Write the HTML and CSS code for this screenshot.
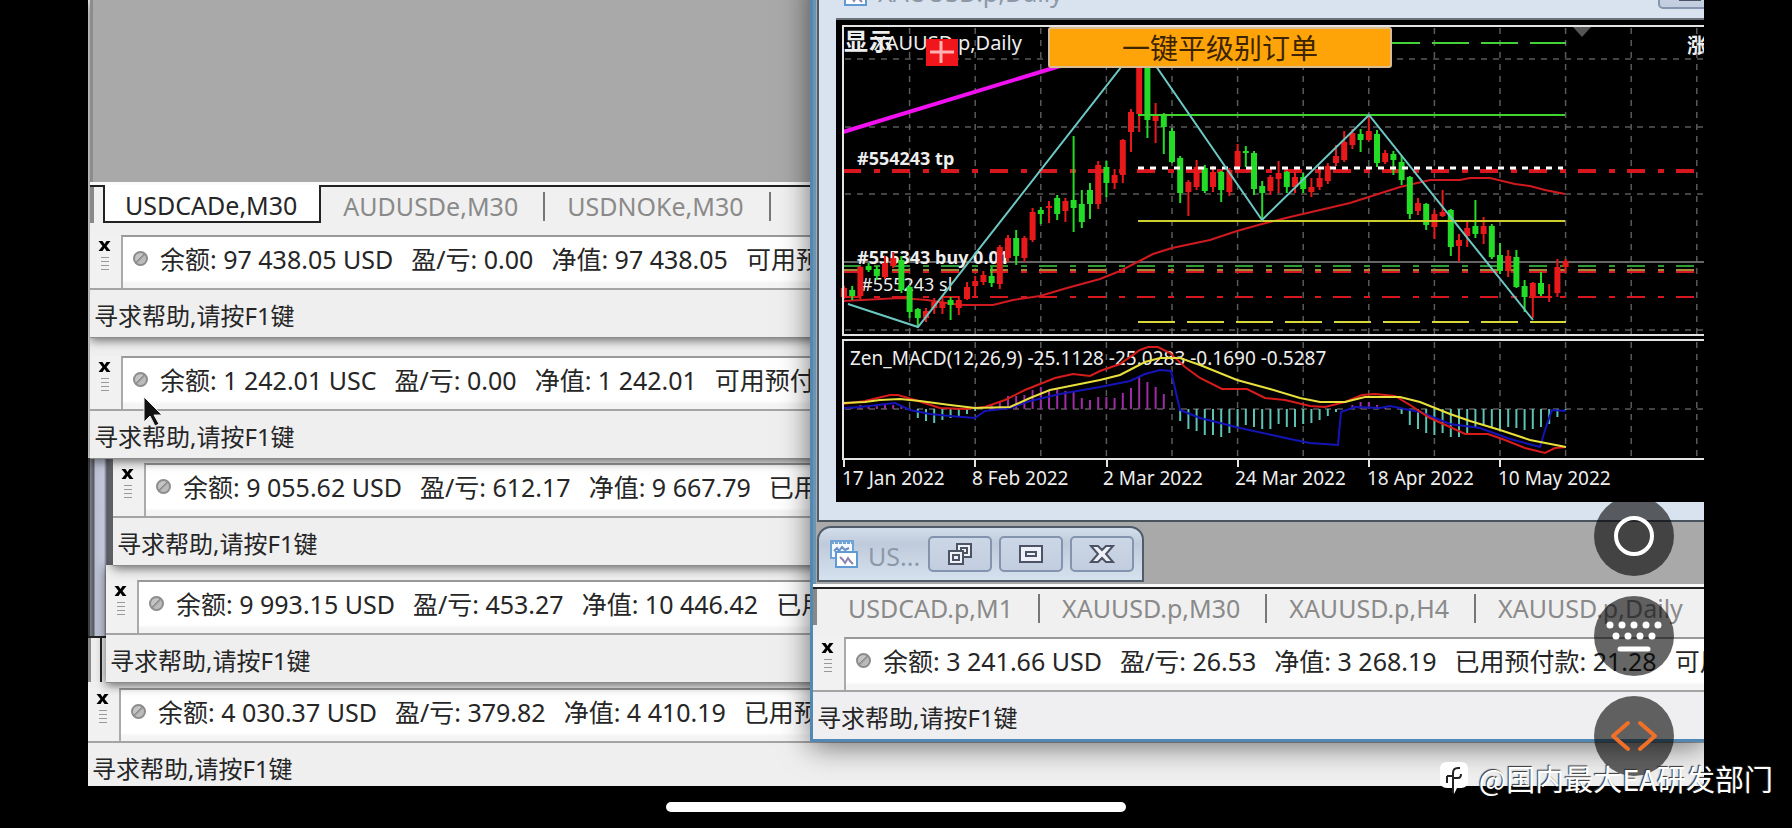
FILE: index.html
```html
<!DOCTYPE html>
<html lang="zh-CN">

<head>
    <meta charset="UTF-8">
    <meta name="viewport" content="width=device-width, initial-scale=1.0">
    <title>MT4</title>
    <link rel="stylesheet" href="styles.css">
</head>

<body>
    <svg class="sprite" aria-hidden="true">
        <symbol id="close" viewBox="0 0 12 12">
            <path d="M0 1h4l2 3 2-3h4L8 6l4 5H8L6 8l-2 3H0l4-5z" />
        </symbol>
        <symbol id="chart-icon" viewBox="0 0 30 30">
            <path d="M2 2h22v17H2z" fill="#f4f9ff" stroke="#6fa3d6" stroke-width="2" />
            <path d="M2 3h22" stroke="#6fa3d6" stroke-width="4" stroke-dasharray="3 1" />
            <path d="M5 12l3-3 2 3 3-4 3 3 4-2" fill="none" stroke="#6a8fc4" stroke-width="2" />
            <path d="M7 13h21v15H7z" fill="#fff" stroke="#5f9ad4" stroke-width="2" />
            <path d="M11 18l3 3 2 3 3-5 2 3 3 3" fill="none" stroke="#8a83b4" stroke-width="2" />
        </symbol>
    </svg>

    <main class="screen">
        <div class="left">
            <section class="terminal first">
                <div class="mdi"></div>
                <nav class="tabs">
                    <a class="tab active" href="#">USDCADe,M30</a>
                    <a class="tab" href="#">AUDUSDe,M30</a>
                    <a class="tab" href="#">USDNOKe,M30</a>
                </nav>
                <div class="toolbar">
                    <div class="grip"><button aria-label="关闭"><svg><use href="#close" /></svg></button></div>
                    <div class="balance"><i class="dot"></i><span>余额: 97 438.05 USD</span><span>盈/亏: 0.00</span><span>净值: 97 438.05</span><span>可用预付款</span></div>
                </div>
                <div class="status">寻求帮助,请按F1键</div>
            </section>

            <section class="terminal second">
                <div class="toolbar">
                    <div class="grip"><button aria-label="关闭"><svg><use href="#close" /></svg></button></div>
                    <div class="balance"><i class="dot"></i><span>余额: 1 242.01 USC</span><span>盈/亏: 0.00</span><span>净值: 1 242.01</span><span>可用预付款</span></div>
                </div>
                <div class="status">寻求帮助,请按F1键</div>
            </section>

            <div class="group">
                <section class="terminal third">
                    <div class="toolbar">
                        <div class="grip"><button aria-label="关闭"><svg><use href="#close" /></svg></button></div>
                        <div class="balance"><i class="dot"></i><span>余额: 9 055.62 USD</span><span>盈/亏: 612.17</span><span>净值: 9 667.79</span><span>已用预付款</span></div>
                    </div>
                    <div class="status">寻求帮助,请按F1键</div>
                </section>

                <section class="terminal fourth">
                    <div class="toolbar">
                        <div class="grip"><button aria-label="关闭"><svg><use href="#close" /></svg></button></div>
                        <div class="balance"><i class="dot"></i><span>余额: 9 993.15 USD</span><span>盈/亏: 453.27</span><span>净值: 10 446.42</span><span>已用预付款</span></div>
                    </div>
                    <div class="status">寻求帮助,请按F1键</div>
                </section>
            </div>

            <section class="terminal fifth">
                <div class="toolbar">
                    <div class="grip"><button aria-label="关闭"><svg><use href="#close" /></svg></button></div>
                    <div class="balance"><i class="dot"></i><span>余额: 4 030.37 USD</span><span>盈/亏: 379.82</span><span>净值: 4 410.19</span><span>已用预付款</span></div>
                </div>
                <div class="status">寻求帮助,请按F1键</div>
            </section>
        </div>

        <section class="window">
            <div class="workspace">
                <div class="child">
                    <header class="child-title">
                        <svg class="icon"><use href="#chart-icon" /></svg>
                        <span>XAUUSD.p,Daily</span>
                        <button class="win-btn" aria-label="最小化">
                            <svg viewBox="0 0 26 26"><path d="M3 15h20v6H3z" /></svg>
                        </button>
                    </header>
                    <div class="chart">
                        <svg viewBox="836 20 868 482" preserveAspectRatio="xMinYMin slice">
                            <g class="grid" id="grid"></g>
                            <path class="price" d="M844 262H1704" />
                            <path d="M1573 27h18l-9 10z" fill="#555" />

                            <path class="levels green" d="M843 266H1698" />
                            <path class="levels olive" d="M843 270H1698" />
                            <path class="levels red" d="M843 272H1698" />
                            <path class="levels red" d="M843 297H1698" />
                            <path class="levels red thick" d="M843 171H1698" />

                            <path d="M843 132L1060 66" stroke="#f010f0" stroke-width="4" />

                            <g class="labels">
                                <text class="zh" x="844" y="50">显</text>
                                <text class="zh" x="869" y="50">示</text>
                                <text class="name" x="874" y="50">XAUUSD.p,Daily</text>
                                <text class="zh small" x="1687" y="53">涨</text>
                                <text class="order bold" x="857" y="165">#554243 tp</text>
                                <text class="order bold" x="857" y="264">#555343 buy 0.01</text>
                                <text class="order" x="861" y="291">#555243 sl</text>
                                <text x="850" y="365">Zen_MACD(12,26,9) -25.1128 -25.0283 -0.1690 -0.5287</text>
                                <text x="842" y="485">17 Jan 2022</text>
                                <text x="972" y="485">8 Feb 2022</text>
                                <text x="1103" y="485">2 Mar 2022</text>
                                <text x="1235" y="485">24 Mar 2022</text>
                                <text x="1367" y="485">18 Apr 2022</text>
                                <text x="1498" y="485">10 May 2022</text>
                            </g>

                            <path class="average" d="M843 301L900 298L927 300L960 305L993 305L1013 300L1040 296L1067 288L1100 279L1120 271L1153 254L1172 248L1210 240L1237 231L1262 224L1290 217L1320 210L1350 203L1375 195L1400 187L1430 180L1460 180L1470 178L1490 178L1515 184L1530 186L1545 190L1565 194" />

                            <g id="candles"></g>

                            <path d="M1138 115H1565" stroke="#3fd52f" stroke-width="2" />
                            <path d="M1138 221H1565" stroke="#cfd02c" stroke-width="2" />
                            <path d="M1138 43H1566" stroke="#44d238" stroke-width="2" stroke-dasharray="37 12" />
                            <path d="M1138 322H1566" stroke="#d8d83a" stroke-width="2" stroke-dasharray="37 12" />
                            <path d="M1138 168H1563" stroke="#fff" stroke-width="3" stroke-dasharray="6 6" />
                            <path class="zigzag" d="M848 304L918 327L1140 43L1262 220L1369 115L1533 320" />

                            <g id="macd"></g>
                            <path class="line" stroke="#1414b8" d="M843 408L860 407L895 403L910 410L930 414L950 416L975 418L985 411L1010 408L1030 401L1060 394L1100 387L1130 381L1145 374L1160 370L1171 371L1180 410L1200 418L1240 428L1290 439L1310 443L1338 445L1341 412L1355 407L1380 408L1390 406L1420 412L1450 424L1480 428L1510 439L1540 447L1545 430L1552 410L1566 411" />
                            <path class="line" stroke="#d81c1c" d="M843 404L865 401L890 395L898 395L915 400L940 408L965 409L985 407L1005 400L1025 390L1040 384L1055 378L1073 374L1090 376L1100 371L1120 364L1140 350L1148 347L1158 347L1170 353L1185 367L1200 378L1222 389L1247 389L1265 398L1285 400L1310 406L1325 407L1345 402L1362 395L1375 394L1395 396L1410 405L1430 418L1450 427L1465 434L1488 434L1505 440L1525 448L1545 453L1555 448L1566 447" />
                            <path class="line" stroke="#e8e03c" d="M843 403L865 402L880 400L900 399L920 401L950 405L975 408L1010 407L1030 398L1050 390L1075 385L1100 380L1120 375L1145 362L1160 358L1180 358L1200 365L1237 380L1270 389L1300 398L1320 402L1345 402L1365 397L1400 397L1420 402L1450 414L1470 421L1500 430L1530 440L1566 447" />

                            <path class="frame" d="M1704 26H843V335H1704M1704 340H843V459H1704M844 459v8M975 459v8M1107 459v8M1238 459v8M1369 459v8M1500 459v8" />
                            <path d="M926 39h32v27h-32z" fill="#f0161c" />
                            <path d="M930 52h24M941 41v22" stroke="#ffb0b0" stroke-width="3" />
                        </svg>
                        <button class="close-orders">一键平级别订单</button>
                    </div>
                </div>

                <div class="mini">
                    <svg class="icon"><use href="#chart-icon" /></svg>
                    <span>US...</span>
                    <button class="win-btn" aria-label="还原">
                        <svg viewBox="0 0 26 26"><path d="M10 3h14v13H10z" /><path d="M14 7h6v5h-6z" /><path d="M2 10h14v13H2z" /><path d="M6 14h6v5H6z" /></svg>
                    </button>
                    <button class="win-btn" aria-label="最大化">
                        <svg viewBox="0 0 26 26"><path d="M2 5h22v16H2z" /><path d="M8 11h10v4H8z" /></svg>
                    </button>
                    <button class="win-btn" aria-label="关闭">
                        <svg viewBox="0 0 26 26"><path d="M2 5h7l4 4 4-4h7l-7 8 7 8h-7l-4-4-4 4H2l7-8z" /></svg>
                    </button>
                </div>
            </div>

            <nav class="tabs">
                <a class="tab" href="#">USDCAD.p,M1</a>
                <a class="tab" href="#">XAUUSD.p,M30</a>
                <a class="tab" href="#">XAUUSD.p,H4</a>
                <a class="tab" href="#">XAUUSD.p,Daily</a>
            </nav>
            <div class="toolbar">
                <div class="grip"><button aria-label="关闭"><svg><use href="#close" /></svg></button></div>
                <div class="balance"><i class="dot"></i><span>余额: 3 241.66 USD</span><span>盈/亏: 26.53</span><span>净值: 3 268.19</span><span>已用预付款: 21.28</span><span>可用预付款</span></div>
            </div>
            <div class="status">寻求帮助,请按F1键</div>
        </section>

        <svg class="cursor" viewBox="0 0 20 31">
            <path d="M1 1v25l6-6 5 10 4-2-5-9h8z" fill="#111" stroke="#eee" />
        </svg>

        <div class="fabs">
            <button aria-label="主页">
                <svg viewBox="0 0 80 80"><circle cx="40" cy="40" r="18" fill="none" stroke="#fff" stroke-width="4" /></svg>
            </button>
            <button aria-label="键盘">
                <svg viewBox="0 0 80 80" fill="none" stroke="#fff" stroke-linecap="round">
                    <path d="M16 29h50" stroke-width="7" stroke-dasharray="0 12" />
                    <path d="M22 40h38" stroke-width="7" stroke-dasharray="0 12" />
                    <path d="M26 53h28" stroke-width="5" />
                </svg>
            </button>
            <button aria-label="代码">
                <svg viewBox="0 0 80 80" fill="none" stroke="#f07028" stroke-width="4" stroke-linecap="round" stroke-linejoin="round">
                    <path d="M34 27L19 40l15 13M46 27l15 13-15 13" />
                </svg>
            </button>
        </div>
    </main>

    <div class="watermark">
        <svg viewBox="0 0 30 34">
            <path d="M8 1h14q7 0 7 7v12q0 7-7 7h-4l-3 6-1-6H8q-7 0-7-7V8q0-7 7-7z" fill="#fff" />
            <path d="M14 32V12q0-5 5-5h2M8 15h6M8 15v7M14 17h5q3 0 3-4" fill="none" stroke="#222" stroke-width="2" />
        </svg>
        <span>@国内最大EA研发部门</span>
    </div>
    <div class="home-bar"></div>

    <script>
        const NS = "http://www.w3.org/2000/svg";
        const barX = i => 844 + i * 8.2;

        function addPath(parent, d, attrs) {
            const p = document.createElementNS(NS, "path");
            p.setAttribute("d", d);
            for (const key in attrs) p.setAttribute(key, attrs[key]);
            parent.appendChild(p);
        }

        // grid
        const grid = document.getElementById("grid");
        for (let i = 8; i < 106; i += 8) {
            addPath(grid, `M${barX(i)} 28V334M${barX(i)} 342V458`, {});
        }
        [59, 127, 194, 330, 409].forEach(y => addPath(grid, `M845 ${y}H1704`, {}));

        // up/down, high, low, body top, body bottom
        const candles = [
            ["r", 286, 299, 288, 297], ["g", 286, 300, 290, 296], ["r", 266, 299, 267, 296], ["g", 263, 272, 266, 270],
            ["g", 266, 280, 269, 276], ["r", 256, 279, 263, 277], ["r", 252, 268, 258, 266], ["g", 256, 293, 260, 290],
            ["g", 285, 318, 287, 312], ["g", 308, 326, 309, 318], ["r", 308, 322, 311, 318], ["r", 298, 314, 302, 308],
            ["r", 296, 314, 302, 308], ["g", 297, 320, 300, 305], ["r", 296, 315, 300, 308], ["r", 282, 300, 287, 299],
            ["r", 276, 298, 281, 286], ["r", 271, 285, 275, 282], ["g", 267, 287, 276, 283], ["r", 245, 289, 247, 284],
            ["r", 235, 262, 238, 258], ["g", 230, 265, 238, 256], ["r", 236, 262, 238, 258], ["r", 208, 242, 212, 240],
            ["g", 207, 224, 210, 214], ["r", 201, 223, 206, 208], ["g", 195, 220, 198, 214], ["r", 198, 222, 201, 211],
            ["g", 136, 232, 200, 208], ["g", 190, 228, 204, 222], ["g", 183, 219, 190, 204], ["r", 161, 209, 165, 204],
            ["g", 161, 197, 167, 183], ["r", 169, 189, 175, 183], ["r", 139, 183, 140, 175], ["r", 109, 152, 112, 132],
            ["r", 60, 132, 60, 114], ["g", 60, 138, 60, 120], ["r", 103, 143, 115, 121], ["g", 113, 154, 114, 127],
            ["g", 128, 163, 131, 162], ["g", 156, 203, 158, 193], ["r", 180, 216, 182, 192], ["r", 160, 190, 167, 187],
            ["g", 165, 193, 168, 191], ["r", 166, 192, 172, 187], ["g", 171, 202, 172, 190], ["r", 168, 196, 170, 192],
            ["r", 144, 173, 151, 167], ["g", 146, 167, 151, 153], ["g", 151, 195, 153, 189], ["g", 181, 220, 186, 193],
            ["r", 175, 195, 177, 191], ["r", 161, 193, 173, 179], ["g", 171, 193, 172, 187], ["r", 171, 193, 177, 187],
            ["g", 173, 193, 177, 189], ["r", 178, 197, 187, 192], ["r", 171, 190, 178, 187], ["r", 163, 184, 166, 181],
            ["r", 145, 166, 156, 163], ["r", 131, 162, 142, 160], ["r", 129, 149, 133, 145], ["g", 129, 152, 134, 140],
            ["r", 115, 141, 131, 140], ["g", 130, 167, 134, 163], ["r", 150, 164, 153, 162], ["g", 151, 175, 154, 160],
            ["g", 156, 185, 162, 180], ["g", 176, 219, 177, 214], ["r", 198, 215, 203, 211], ["g", 203, 230, 204, 225],
            ["r", 210, 239, 214, 227], ["r", 190, 217, 212, 216], ["g", 209, 256, 210, 247], ["r", 234, 262, 240, 246],
            ["r", 222, 247, 228, 236], ["g", 200, 238, 226, 234], ["r", 217, 244, 226, 234], ["g", 224, 259, 226, 257],
            ["g", 243, 274, 255, 271], ["r", 250, 277, 256, 271], ["g", 250, 288, 257, 287], ["g", 280, 312, 286, 297],
            ["r", 282, 318, 283, 296], ["g", 272, 296, 283, 294], ["r", 284, 302, 296, 298], ["r", 259, 297, 267, 293],
            ["r", 259, 273, 261, 267]
        ];
        const candleBox = document.getElementById("candles");
        candles.forEach(([side, high, low, top, bottom], i) => {
            const color = side === "r" ? "#e8191b" : "#22dc26";
            addPath(candleBox, `M${barX(i)} ${high}V${low}`, { stroke: color, "stroke-width": 2 });
            addPath(candleBox, `M${barX(i)} ${top}V${bottom}`, { stroke: color, "stroke-width": 6 });
        });

        // histogram, y of each bar's end (zero line is 409)
        const histogram = [
            409, 408, 405, 406, 405, 404, 405, 405, 409, 418, 421, 423, 420, 418, 416, 414, 411, 409, 405, 401,
            396, 396, 395, 390, 387, 391, 388, 391, 392, 398, 400, 397, 397, 398, 393, 388, 377, 382, 387, 394,
            409, 421, 429, 431, 435, 435, 437, 433, 427, 425, 427, 429, 429, 424, 427, 427, 424, 423, 420, 416,
            412, 409, 405, 402, 402, 405, 407, 409, 414, 425, 429, 433, 435, 433, 437, 437, 434, 428, 425, 428,
            430, 427, 428, 430, 429, 427, 424, 417, 410
        ];
        const macd = document.getElementById("macd");
        histogram.forEach((y, i) => {
            if (y === 409) return;
            addPath(macd, `M${barX(i)} 409V${y}`, { stroke: y < 409 ? "#a02aa8" : "#5cc4b4", "stroke-width": 2 });
        });
    </script>
</body>

</html>
```

FILE: styles.css
```css
* {
    box-sizing: border-box;
}

body {
    margin: 0;
    height: 100vh;
    overflow: hidden;
    background: #000;
    color: #262626;
    font-family: "Noto Sans", "Noto Sans CJK SC", sans-serif;
}

button {
    padding: 0;
    border: none;
    background: none;
    font-family: inherit;
    cursor: pointer;
}

svg {
    display: block;
}

.sprite {
    position: absolute;
    width: 0;
    height: 0;
}

.screen {
    position: relative;
    z-index: 0;
    height: calc(100vh - 42px);
    margin: 0 88px;
    overflow: hidden;
    background: #eee;
}

/* left side: stacked terminals */
.left {
    display: flex;
    flex-direction: column;
    height: 100%;
}

.terminal {
    position: relative;
    background: #efeff0;
    box-shadow: 0 1px 0 #8c8c8c, 0 3px 10px rgba(0, 0, 0, 0.6);
}

.first {
    display: flex;
    flex-direction: column;
    flex: 1;
    z-index: 5;
    margin-left: 2px;
}

.second {
    z-index: 4;
    margin-left: 2px;
    padding-top: 19px;
}

.group {
    position: relative;
    z-index: 3;
    background: linear-gradient(to right, #3c3c40 2px, #7b7d84 2px, #55585f 6px, #b9bfd2 7px, #c6cadc 16px, #5d6068 19px, #85878c 25px);
}

.group::before {
    content: "";
    position: absolute;
    left: 0;
    bottom: 0;
    width: 18px;
    height: 44px;
    border-top: 2px solid #222;
    background: linear-gradient(to right, #8a8a8a 3px, #eee 3px, #eee 12px, #222 12px, #222 14px, #eee 14px);
}

.third {
    z-index: 2;
    margin-left: 25px;
    padding-top: 5px;
}

.fourth {
    margin-left: 18px;
    padding-top: 15px;
}

.fifth {
    z-index: 1;
    padding-top: 6px;
}

.fifth .status {
    height: 45px;
}

.mdi {
    flex: 1;
    border-left: 3px solid #8c8c8c;
    background: #a9a9a9;
}

.tabs {
    display: flex;
    height: 53px;
    padding: 0 0 12px 13px;
    overflow: hidden;
    border-top: 3px solid #fafafa;
    background: linear-gradient(#222 2px, transparent 2px), linear-gradient(to right, #888 4px, #f0f0f0 4px) 0 0 / 100% 38px no-repeat, #f0f0f0;
}

.tab {
    display: flex;
    align-items: center;
    padding: 4px 0 0 22px;
    color: #8a8a8a;
    font-size: 25px;
    line-height: 36px;
    text-decoration: none;
    white-space: nowrap;
}

.tab::after {
    content: "";
    width: 2px;
    height: 29px;
    margin-left: 25px;
    background: #777;
}

.tab.active {
    padding: 4px 22px 0 20px;
    border: 2px solid #222;
    border-top: none;
    background: #fff;
    color: #262626;
}

.tab.active::after {
    display: none;
}

.toolbar {
    display: flex;
    height: 53px;
    background: #f1f1f1;
}

.grip {
    flex: none;
    width: 31px;
    padding: 5px 0 0 8px;
}

.grip svg {
    width: 13px;
    height: 12px;
    fill: #000;
}

.grip::after {
    content: "";
    display: block;
    width: 8px;
    height: 16px;
    margin: 5px 0 0 3px;
    background: repeating-linear-gradient(#999 0 1px, transparent 1px 4px);
}

.grip button {
    display: block;
}

.balance {
    display: flex;
    flex: 1;
    align-items: center;
    gap: 18px;
    min-width: 0;
    padding: 0 0 8px 10px;
    overflow: hidden;
    border-top: 2px solid #999;
    border-left: 2px solid #aaa;
    background: linear-gradient(#fff 43px, #f4f4f4 46px);
    font-size: 25px;
    line-height: 36px;
    white-space: nowrap;
}

.dot {
    flex: none;
    width: 15px;
    height: 15px;
    margin-right: -6px;
    border: 2px solid #8c8c8c;
    border-radius: 50%;
    background: linear-gradient(135deg, #c4c4c4 45%, #888 45%, #bbb 60%);
}

.status {
    height: 49px;
    padding: 2px 4px 0;
    border-top: 2px solid #a4a4a4;
    font-size: 24px;
    line-height: 48px;
    white-space: nowrap;
}

/* right side: floating terminal */
.window {
    position: absolute;
    z-index: 6;
    top: -26px;
    left: 722px;
    right: 0;
    border: solid #5189b4;
    border-width: 0 0 3px 3px;
    background: #efeff1;
    box-shadow: 0 4px 28px rgba(0, 0, 0, 0.55);
}

.workspace {
    height: 610px;
    padding-left: 4px;
    background: linear-gradient(to right, #6c93b0 3px, #a9a9a9 3px);
}

.child {
    padding: 0 0 18px 17px;
    border-bottom: 2px solid #4a545e;
    border-left: 2px solid #4c5c6c;
    background: #d9e3ef;
}

.child-title {
    display: flex;
    align-items: center;
    height: 44px;
    padding: 0 0 8px 2px;
    color: #8d98a6;
    font-size: 25px;
    line-height: 36px;
}

.icon {
    flex: none;
    width: 30px;
    height: 30px;
    margin-right: 10px;
}

.child-title .win-btn {
    height: 34px;
    margin: 0 -18px 0 auto;
}

.chart {
    position: relative;
    height: 484px;
    overflow: hidden;
    border-top: 2px solid #6b7178;
    background: #000;
}

.chart > svg {
    width: 100%;
    height: 482px;
    fill: none;
}

.grid path {
    stroke: #5a5a5a;
    stroke-width: 1.5;
    stroke-dasharray: 6 6;
}

.price {
    stroke: #666;
    stroke-width: 2;
}

.levels {
    stroke-width: 2;
    stroke-dasharray: 18 13 6 12;
}

.levels.thick {
    stroke-width: 4;
}

.green {
    stroke: #2f9a36;
}

.olive {
    stroke: #a08a3c;
}

.red {
    stroke: #d8161e;
}

.average {
    stroke: #d01a20;
    stroke-width: 2;
}

.zigzag {
    stroke: #6cc8c4;
    stroke-width: 2;
}

.line {
    stroke-width: 2;
}

.frame {
    stroke: #e4e4e4;
    stroke-width: 2;
}

.labels {
    fill: #eee;
    font-size: 19px;
}

.labels .zh {
    font-size: 24px;
    font-weight: bold;
}

.labels .small {
    font-size: 20px;
}

.labels .name {
    font-size: 20px;
}

.labels .order {
    font-size: 18px;
}

.labels .bold {
    font-weight: bold;
}

.close-orders {
    position: absolute;
    top: 7px;
    left: 212px;
    width: 344px;
    height: 41px;
    border: 2px solid #d9bd90;
    border-radius: 3px;
    background: #ffa408;
    color: #3c2400;
    font-size: 28px;
    line-height: 36px;
}

.mini {
    display: flex;
    align-items: center;
    gap: 7px;
    width: 327px;
    height: 56px;
    margin-top: 4px;
    padding: 0 8px 0 10px;
    border: 2px solid #505c6a;
    border-radius: 14px 14px 0 0;
    background: linear-gradient(#d3deea, #bfcbdb 30%, #d6e1ee);
    color: #8b99aa;
    font-size: 25px;
}

.mini .icon {
    margin-right: 2px;
}

.mini span {
    flex: 1;
    padding-top: 4px;
}

.win-btn {
    display: flex;
    flex: none;
    align-items: center;
    justify-content: center;
    width: 64px;
    height: 36px;
    border: 2px solid #8494ae;
    border-radius: 5px;
    background: linear-gradient(#cbd6e6, #c2cddf);
}

.win-btn svg {
    width: 26px;
    height: 26px;
    fill: #eef2f8;
    stroke: #4c5364;
    stroke-width: 2;
}

.cursor {
    position: absolute;
    z-index: 7;
    top: 396px;
    left: 55px;
    width: 20px;
    height: 31px;
}

.fabs {
    position: absolute;
    z-index: 8;
    right: 30px;
    bottom: 10px;
    display: flex;
    flex-direction: column;
    gap: 20px;
}

.fabs button {
    width: 80px;
    height: 80px;
    border-radius: 50%;
    background: rgba(0, 0, 0, 0.6);
}

.watermark {
    position: absolute;
    z-index: 1;
    right: 19px;
    bottom: 28px;
    display: flex;
    align-items: center;
    gap: 10px;
    color: #fff;
    font-family: "Noto Sans CJK SC", sans-serif;
    font-size: 29px;
    line-height: 44px;
    text-shadow: -1px -1px 1px #333;
}

.watermark svg {
    width: 30px;
    height: 34px;
}

.home-bar {
    width: 460px;
    height: 10px;
    margin: 16px auto 0;
    border-radius: 5px;
    background: #fff;
}
```
